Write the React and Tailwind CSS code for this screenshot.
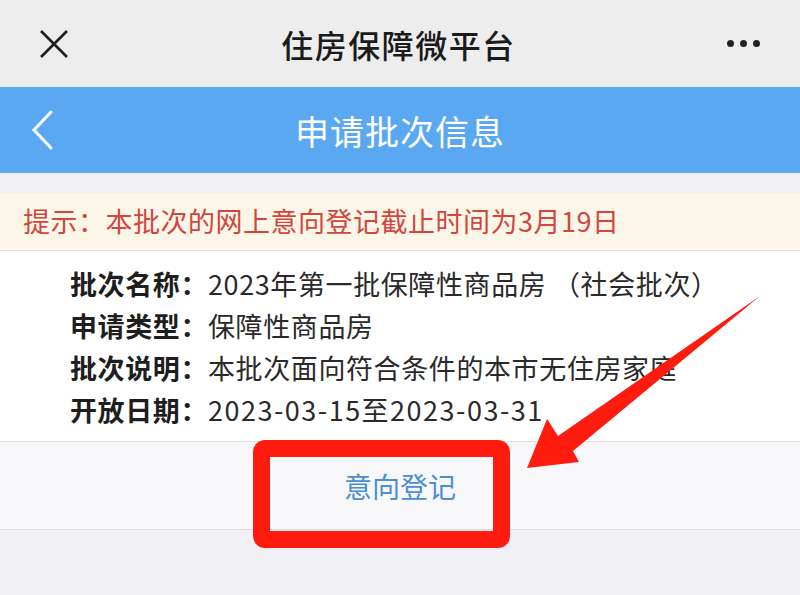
import React from "react";

const rows = [
    ["批次名称：", "2023年第一批保障性商品房 （社会批次）", "tracking-[0.6px]"],
    ["申请类型：", "保障性商品房", "tracking-[0.6px]"],
    ["批次说明：", "本批次面向符合条件的本市无住房家庭", "tracking-[0.6px]"],
    ["开放日期：", "2023-03-15至2023-03-31", "tracking-[1.5px]"],
];

function App() {
    return (
        <div
            className="relative w-[800px] h-[595px] overflow-hidden bg-[#efeff4]"
            style={{ fontFamily: '"Noto Sans CJK SC", "Noto Sans", sans-serif' }}
        >
            {/* wechat top bar */}
            <div className="h-[87px] bg-[#ededed] flex items-center justify-between px-[38px]">
                <svg width="32" height="32" viewBox="0 0 32 32" className="text-[#1f1f1f]">
                    <path d="M3 3 L29 29 M29 3 L3 29" stroke="currentColor" strokeWidth="2.6" fill="none" />
                </svg>
                <div className="text-[32px] font-medium text-[#1b1b1b] tracking-[1.5px]">住房保障微平台</div>
                <div className="flex gap-[6px] pr-[2px]">
                    <span className="w-[7px] h-[7px] rounded-full bg-[#222]" />
                    <span className="w-[7px] h-[7px] rounded-full bg-[#222]" />
                    <span className="w-[7px] h-[7px] rounded-full bg-[#222]" />
                </div>
            </div>

            {/* blue header */}
            <div className="h-[86px] bg-[#5aa8f2] relative flex items-center justify-center">
                <svg width="24" height="42" viewBox="0 0 24 42" className="absolute left-[30px] top-[22px]">
                    <path d="M21 3 L4 21 L21 39" stroke="#fff" strokeWidth="3" fill="none" strokeLinecap="round" />
                </svg>
                <div className="text-[34px] text-white tracking-[1px]">申请批次信息</div>
            </div>

            <div className="h-[20px]" />

            {/* notice */}
            <div className="h-[58px] bg-[#fbf6e7] border-b border-[#e4e1dc] flex items-center pl-[23px]">
                <span className="text-[27px] text-[#d2463e] tracking-[0.5px]">提示：本批次的网上意向登记截止时间为3月19日</span>
            </div>

            {/* info */}
            <div className="bg-white pt-[12px] pb-[10px] pl-[70px] border-b border-[#dedede]">
                {rows.map(([k, v, t]) => (
                    <div key={k} className="flex h-[42px] items-center text-[27px] text-[#2a2a2a]">
                        <span className="font-bold text-[#1e1e1e] tracking-[0.6px]">{k}</span>
                        <span className={t}>{v}</span>
                    </div>
                ))}
            </div>

            {/* action */}
            <div className="h-[88px] bg-[#f8f8fa] border-b border-[#dcdcdc] flex items-center justify-center">
                <span className="text-[28px] text-[#4b8fd2]">意向登记</span>
            </div>

            {/* annotation box */}
            <div className="absolute left-[253px] top-[440px] w-[257px] h-[108px] border-[17px] border-[#ff1c0f] rounded-[12px]" />

            {/* annotation arrow */}
            <svg className="absolute left-0 top-0" width="800" height="595" viewBox="0 0 800 595">
                <polygon
                    points="760,296 573,451 579,462 527,468 547,419 558,436"
                    fill="#ff1c0f"
                />
            </svg>
        </div>
    );
}

export default App;
